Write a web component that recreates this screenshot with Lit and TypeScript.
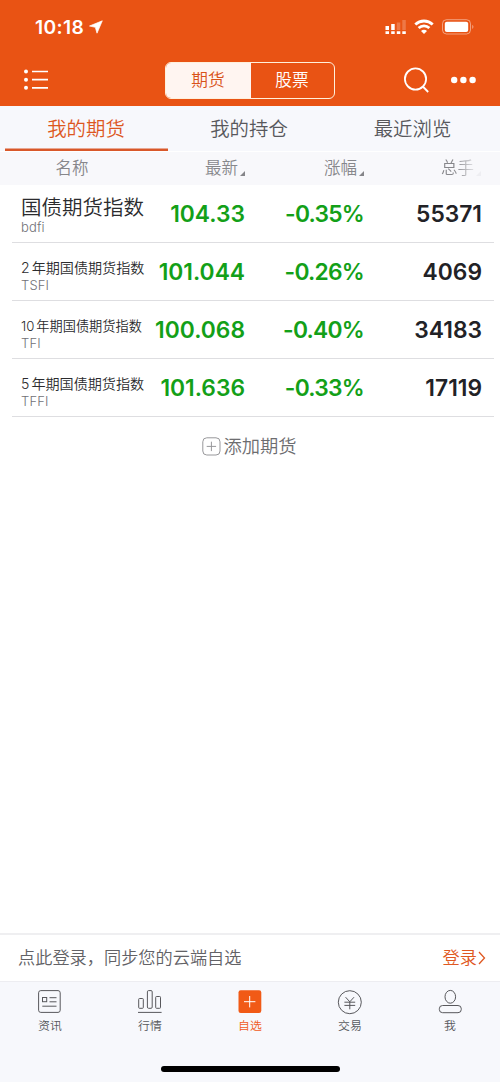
import { LitElement, html, css, svg } from "lit";
import { customElement } from "lit/decorators.js";
import { classMap } from "lit/directives/class-map.js";

interface Quote { prefix: string; name: string; size: string; code: string; last: string; change: string; volume: string }

const quotes: Quote[] = [
  { prefix: "", name: "国债期货指数", size: "large", code: "bdfi", last: "104.33", change: "-0.35%", volume: "55371" },
  { prefix: "2", name: "年期国债期货指数", size: "medium", code: "TSFI", last: "101.044", change: "-0.26%", volume: "4069" },
  { prefix: "10", name: "年期国债期货指数", size: "small", code: "TFI", last: "100.068", change: "-0.40%", volume: "34183" },
  { prefix: "5", name: "年期国债期货指数", size: "medium", code: "TFFI", last: "101.636", change: "-0.33%", volume: "17119" },
];

const nav = [
  { label: "资讯", icon: svg`<rect x="1.6" y="1.6" width="21.6" height="21.8" rx="2.2"/><rect x="5.5" y="8.5" width="4.2" height="4.2"/><path d="M12.5 8.7h7M12.5 12.8h7M5.3 17.2h14.2"/>` },
  { label: "行情", icon: svg`<rect x="1.7" y="9.5" width="4.6" height="9.8" rx=".8"/><rect x="10.4" y="1.6" width="4.8" height="17.7" rx="1.2"/><rect x="18.7" y="7.5" width="4.8" height="11.8" rx=".8"/><path d="M1 23.4h23.6"/>` },
  { label: "自选", icon: svg`<rect class="fill" x="1.5" y="1.2" width="22.8" height="22.8" rx="2.2"/><path class="white" d="M12.7 7v11.4M7 12.7h11.4"/>` },
  { label: "交易", icon: svg`<circle cx="12.8" cy="13.2" r="11.5"/><path d="M8.6 8.2l4.2 4.6L17 8.2M7.4 13.2h10.8M7.4 16.4h10.8M12.8 12.8v7.5"/>` },
  { label: "我", icon: svg`<ellipse cx="13.3" cy="7.8" rx="5.3" ry="6.4"/><rect x="2.3" y="16.5" width="22" height="7.2" rx="3.3"/>` },
];

@customElement("app-root")
export class AppRoot extends LitElement {
  static styles = css`
    :host { display: flex; flex-direction: column; height: 1082px; width: 500px; overflow: hidden; background: #fff; color: #58585c; font-family: Inter, "Noto Sans CJK SC", sans-serif; font-weight: 350; }
    * { box-sizing: border-box; }
    svg { display: block; flex: none; fill: none; stroke: currentColor; }
    .top { height: 106px; background: #e95314; color: #fff; }
    .status { height: 54px; padding: 0 26px 0 35px; display: flex; align-items: center; }
    .time { font-size: 19.2px; line-height: 24px; font-weight: 600; width: 54px; letter-spacing: .35px; }
    .grow { flex: 1; }
    .solid { fill: currentColor; stroke: none; }
    .signals { display: flex; align-items: center; gap: 7px; }
    .bar { height: 52px; padding: 0 23px; display: grid; grid-template-columns: 142px 170px 1fr; align-items: center; }
    .switch { height: 37px; display: flex; border: 1.5px solid #fff0dc; border-radius: 6px; overflow: hidden; font-size: 16.7px; }
    .seg { flex: 1; display: flex; align-items: center; justify-content: center; line-height: 24px; padding-right: 1px; }
    .seg.on { flex: none; width: 85px; background: #fff5f1; color: #d95219; }
    .actions { display: flex; align-items: center; justify-content: flex-end; gap: 20px; }
    .tabs { height: 45px; padding: 0 5px; display: grid; grid-template-columns: 163px 163px 1fr; grid-template-rows: 45px; background: #f7f8fc; font-size: 19.4px; line-height: 46px; text-align: center; }
    .tab { padding-right: 1px; }
    .tab.on { color: #dd571e; box-shadow: inset 0 -2.5px #d9582a; }
    .cols, .row { display: grid; grid-template-columns: 134px 99px 119px 1fr; }
    .cols { height: 34px; padding: 0 19px 0 12px; background: #f8f8fb; color: #87878b; font-size: 16.5px; line-height: 33px; border-top: 1px solid #fff; }
    .col { display: flex; justify-content: flex-end; white-space: nowrap; }
    .col.name { justify-content: center; padding-right: 14px; }
    .col.fade { background: linear-gradient(90deg, #87878b 78%, #f0f0f4 97%); background-clip: text; color: transparent; }
    .sort { margin: 19px 0 0 2px; }
    .list { padding: 0 6px 0 12px; }
    .row { height: 58px; padding-right: 12px; border-bottom: 1px solid #dedee1; }
    .label { padding-left: 9px; white-space: nowrap; }
    .title { height: 35px; display: flex; align-items: flex-end; color: #2b2b2e; }
    .large { font-size: 20.5px; line-height: 24px; }
    .medium { font-size: 14.1px; line-height: 20px; }
    .small { font-size: 13.2px; line-height: 20px; }
    .digit { margin-right: 2px; }
    .code { font-size: 13px; line-height: 16px; letter-spacing: .15px; color: #717176; margin-top: -1px; }
    .num { text-align: right; font-size: 22.8px; font-weight: 600; line-height: 58px; color: #222226; white-space: nowrap; }
    .green { color: #13a018; }
    .change { letter-spacing: -.75px; }
    .add { height: 60px; display: flex; justify-content: center; align-items: center; gap: 2px; padding: 0 1px 2px 0; font-size: 18.3px; line-height: 26px; color: #6d6d70; }
    .box { color: #98989b; }
    .login { height: 48px; border-top: 2px solid #efeff1; padding: 0 14px 0 18px; display: flex; align-items: center; justify-content: space-between; font-size: 17.2px; line-height: 26px; color: #626266; }
    .link { display: flex; align-items: center; color: #df5821; gap: 1px; }
    .bottom { height: 101px; border-top: 1px solid #ededf1; background: #f7f8fc; display: flex; flex-direction: column; align-items: center; }
    .nav { width: 100%; height: 84px; display: grid; grid-template-columns: repeat(5, 1fr); padding-top: 7px; }
    .item { display: flex; flex-direction: column; align-items: center; font-size: 11.9px; line-height: 18px; gap: 2px; }
    .item.on { color: #f15a1b; }
    .fill { fill: #f15a16; stroke: none; }
    .white { stroke: #fff; }
    .home { width: 179px; height: 6px; border-radius: 3px; background: #000; }
  `;

  private sort(color: string) {
    return html`<svg class="sort" width="5" height="5"><path d="M5 0v5H0z" fill=${color} stroke="none"/></svg>`;
  }

  render() {
    return html`
      <header class="top">
        <div class="status">
          <span class="time">10:18</span>
          <svg class="solid" width="14" height="14" viewBox="0 0 14 14"><path d="M13.3.8L.5 6l5.8 1.3L8 13.2z" stroke="#fff" stroke-width=".7" stroke-linejoin="round"/></svg>
          <span class="grow"></span>
          <div class="signals">
            <svg class="solid" width="22" height="16" viewBox="0 0 22 16">
              <path d="M.5 7H4v4H.5zM6.2 5h3.5v6H6.2zM.5 12.2H4V15H.5zM6.2 12.2h3.5V15H6.2zM11.8 12.2h3.5V15h-3.5zM17.3 12.2h3.5V15h-3.5z"/>
              <path d="M11.8 3.4h3.5V11h-3.5zM17.3 1h3.5v10h-3.5z" opacity=".22"/>
            </svg>
            <svg width="20" height="16" viewBox="0 0 20 16"><g stroke-width="2.8"><path d="M1.3 5.5C6.3.8 13.7.8 18.7 5.5M4.6 9.1c3.1-2.9 7.7-2.9 10.8 0"/></g><path d="M10 15l-3-3.1c1.7-1.5 4.3-1.5 6 0z" fill="currentColor" stroke="none"/></svg>
            <svg width="33" height="16" viewBox="0 0 33 16"><rect x="1.5" y=".7" width="28" height="14.3" rx="4" stroke-opacity=".45"/><rect x="3.8" y="2.8" width="23.4" height="10.2" rx="2" fill="currentColor" stroke="none"/><path d="M31.2 5.8c1.7.8 1.7 3.4 0 4.2z" fill="currentColor" stroke="none" opacity=".45"/></svg>
          </div>
        </div>
        <div class="bar">
          <svg width="26" height="22" viewBox="0 0 26 22"><path d="M9 2.5h16M9 10.7h16M9 18.8h16" stroke-width="1.7"/><g fill="currentColor" stroke="none"><circle cx="3" cy="2.6" r="2"/><circle cx="3" cy="10.7" r="2"/><circle cx="3" cy="18.8" r="2"/></g></svg>
          <div class="switch"><span class="seg on">期货</span><span class="seg">股票</span></div>
          <div class="actions">
            <svg width="27" height="26" viewBox="0 0 27 26"><g stroke-width="1.8"><circle cx="12.5" cy="12" r="10.6"/><path d="M19.8 19.5l5.4 5.5"/></g></svg>
            <svg class="solid" width="27" height="8"><circle cx="4.2" cy="4" r="3.2"/><circle cx="13.4" cy="4" r="3.2"/><circle cx="22.6" cy="4" r="3.2"/></svg>
          </div>
        </div>
      </header>
      <div class="tabs"><span class="tab on">我的期货</span><span class="tab">我的持仓</span><span class="tab">最近浏览</span></div>
      <div class="cols">
        <span class="col name">名称</span><span class="col">最新${this.sort("#858589")}</span><span class="col">涨幅${this.sort("#858589")}</span><span class="col fade">总手${this.sort("#eeeef2")}</span>
      </div>
      <main class="list">
        ${quotes.map(q => html`<div class="row">
          <div class="label"><div class="title"><span class=${q.size}>${q.prefix ? html`<span class="digit">${q.prefix}</span>` : ""}${q.name}</span></div><div class="code">${q.code}</div></div>
          <span class="num green">${q.last}</span><span class="num green change">${q.change}</span><span class="num">${q.volume}</span>
        </div>`)}
      </main>
      <div class="add"><svg class="box" width="19" height="19" viewBox="0 0 19 19"><rect x=".8" y=".8" width="17.2" height="17.2" rx="4"/><path d="M9.4 4.7v9.4M4.7 9.4h9.4"/></svg>添加期货</div>
      <div class="grow"></div>
      <div class="login"><span>点此登录，同步您的云端自选</span><span class="link">登录<svg width="8" height="14" viewBox="0 0 8 14"><path d="M1 1l5.5 6L1 13" stroke-width="1.3"/></svg></span></div>
      <footer class="bottom">
        <nav class="nav">${nav.map((n, i) => html`<div class=${classMap({ item: true, on: i === 2 })}><svg width="26" height="26" viewBox="0 0 26 26">${n.icon}</svg>${n.label}</div>`)}</nav>
        <div class="home"></div>
      </footer>`;
  }
}
